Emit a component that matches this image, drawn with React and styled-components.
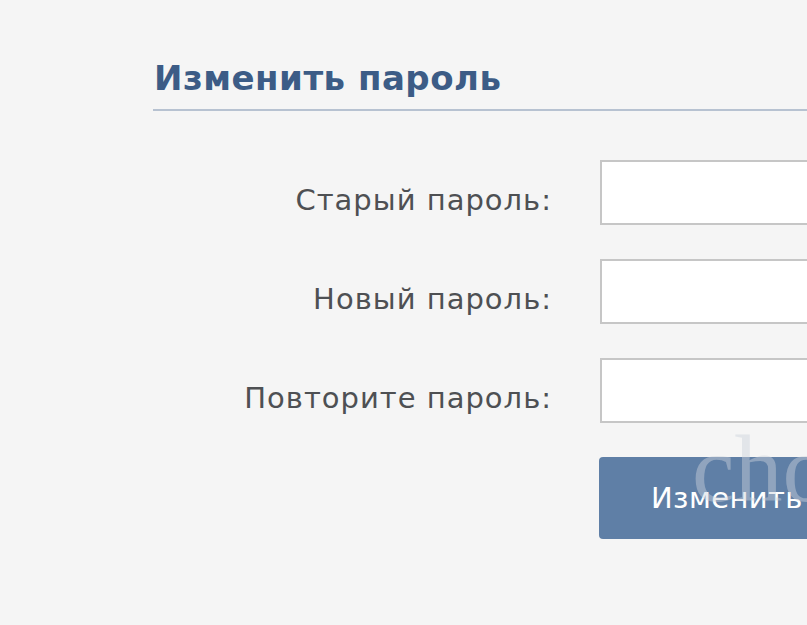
import React from 'react'
import styled, { createGlobalStyle } from 'styled-components'

const Global = createGlobalStyle`
  html, body {
    margin: 0;
    padding: 0;
    background: #f5f5f5;
    overflow: hidden;
  }
`

const Page = styled.div`
  width: 807px;
  height: 625px;
  overflow: hidden;
  padding: 57px 0 0 153px;
  box-sizing: border-box;
  font-family: "DejaVu Sans", Tahoma, sans-serif;
`

const Title = styled.h2`
  margin: 0;
  padding: 0 0 10px 1px;
  font-size: 34px;
  letter-spacing: 0.5px;
  font-weight: bold;
  color: #3c5c86;
  border-bottom: 2px solid #b7c2d1;
  line-height: 42px;
`

const Form = styled.div`
  display: grid;
  grid-template-columns: 398px 300px;
  column-gap: 49px;
  row-gap: 34px;
  padding-top: 49px;
  align-items: center;
`

const Label = styled.label`
  text-align: right;
  font-size: 29px;
  letter-spacing: 1px;
  color: #4e5053;
  padding-top: 14px;
  margin-right: -1px;
`

const Input = styled.input`
  height: 65px;
  box-sizing: border-box;
  border: 2px solid #c6c6c6;
  background: #fff;
  outline: none;
`

const Button = styled.button`
  grid-column: 2;
  margin: 0 0 0 -1px;
  height: 82px;
  width: 300px;
  border: none;
  border-radius: 4px;
  background: #5f7fa6;
  color: #fff;
  font-family: "DejaVu Sans", Tahoma, sans-serif;
  font-size: 29px;
  letter-spacing: 0.4px;
  text-align: left;
  white-space: nowrap;
  padding: 0 0 0 52px;
  position: relative;
`

const Watermark = styled.span`
  position: absolute;
  left: 93px;
  top: -44px;
  font-family: "Liberation Serif", serif;
  font-size: 96px;
  letter-spacing: 0;
  color: rgba(205, 210, 220, 0.45);
  pointer-events: none;
`

const fields = ['Старый пароль:', 'Новый пароль:', 'Повторите пароль:']

export default function App() {
  return (
    <Page>
      <Global />
      <Title>Изменить пароль</Title>
      <Form>
        {fields.map((f) => (
          <React.Fragment key={f}>
            <Label>{f}</Label>
            <Input type="password" />
          </React.Fragment>
        ))}
        <Button>
          Изменить пароль
          <Watermark>cho</Watermark>
        </Button>
      </Form>
    </Page>
  )
}
